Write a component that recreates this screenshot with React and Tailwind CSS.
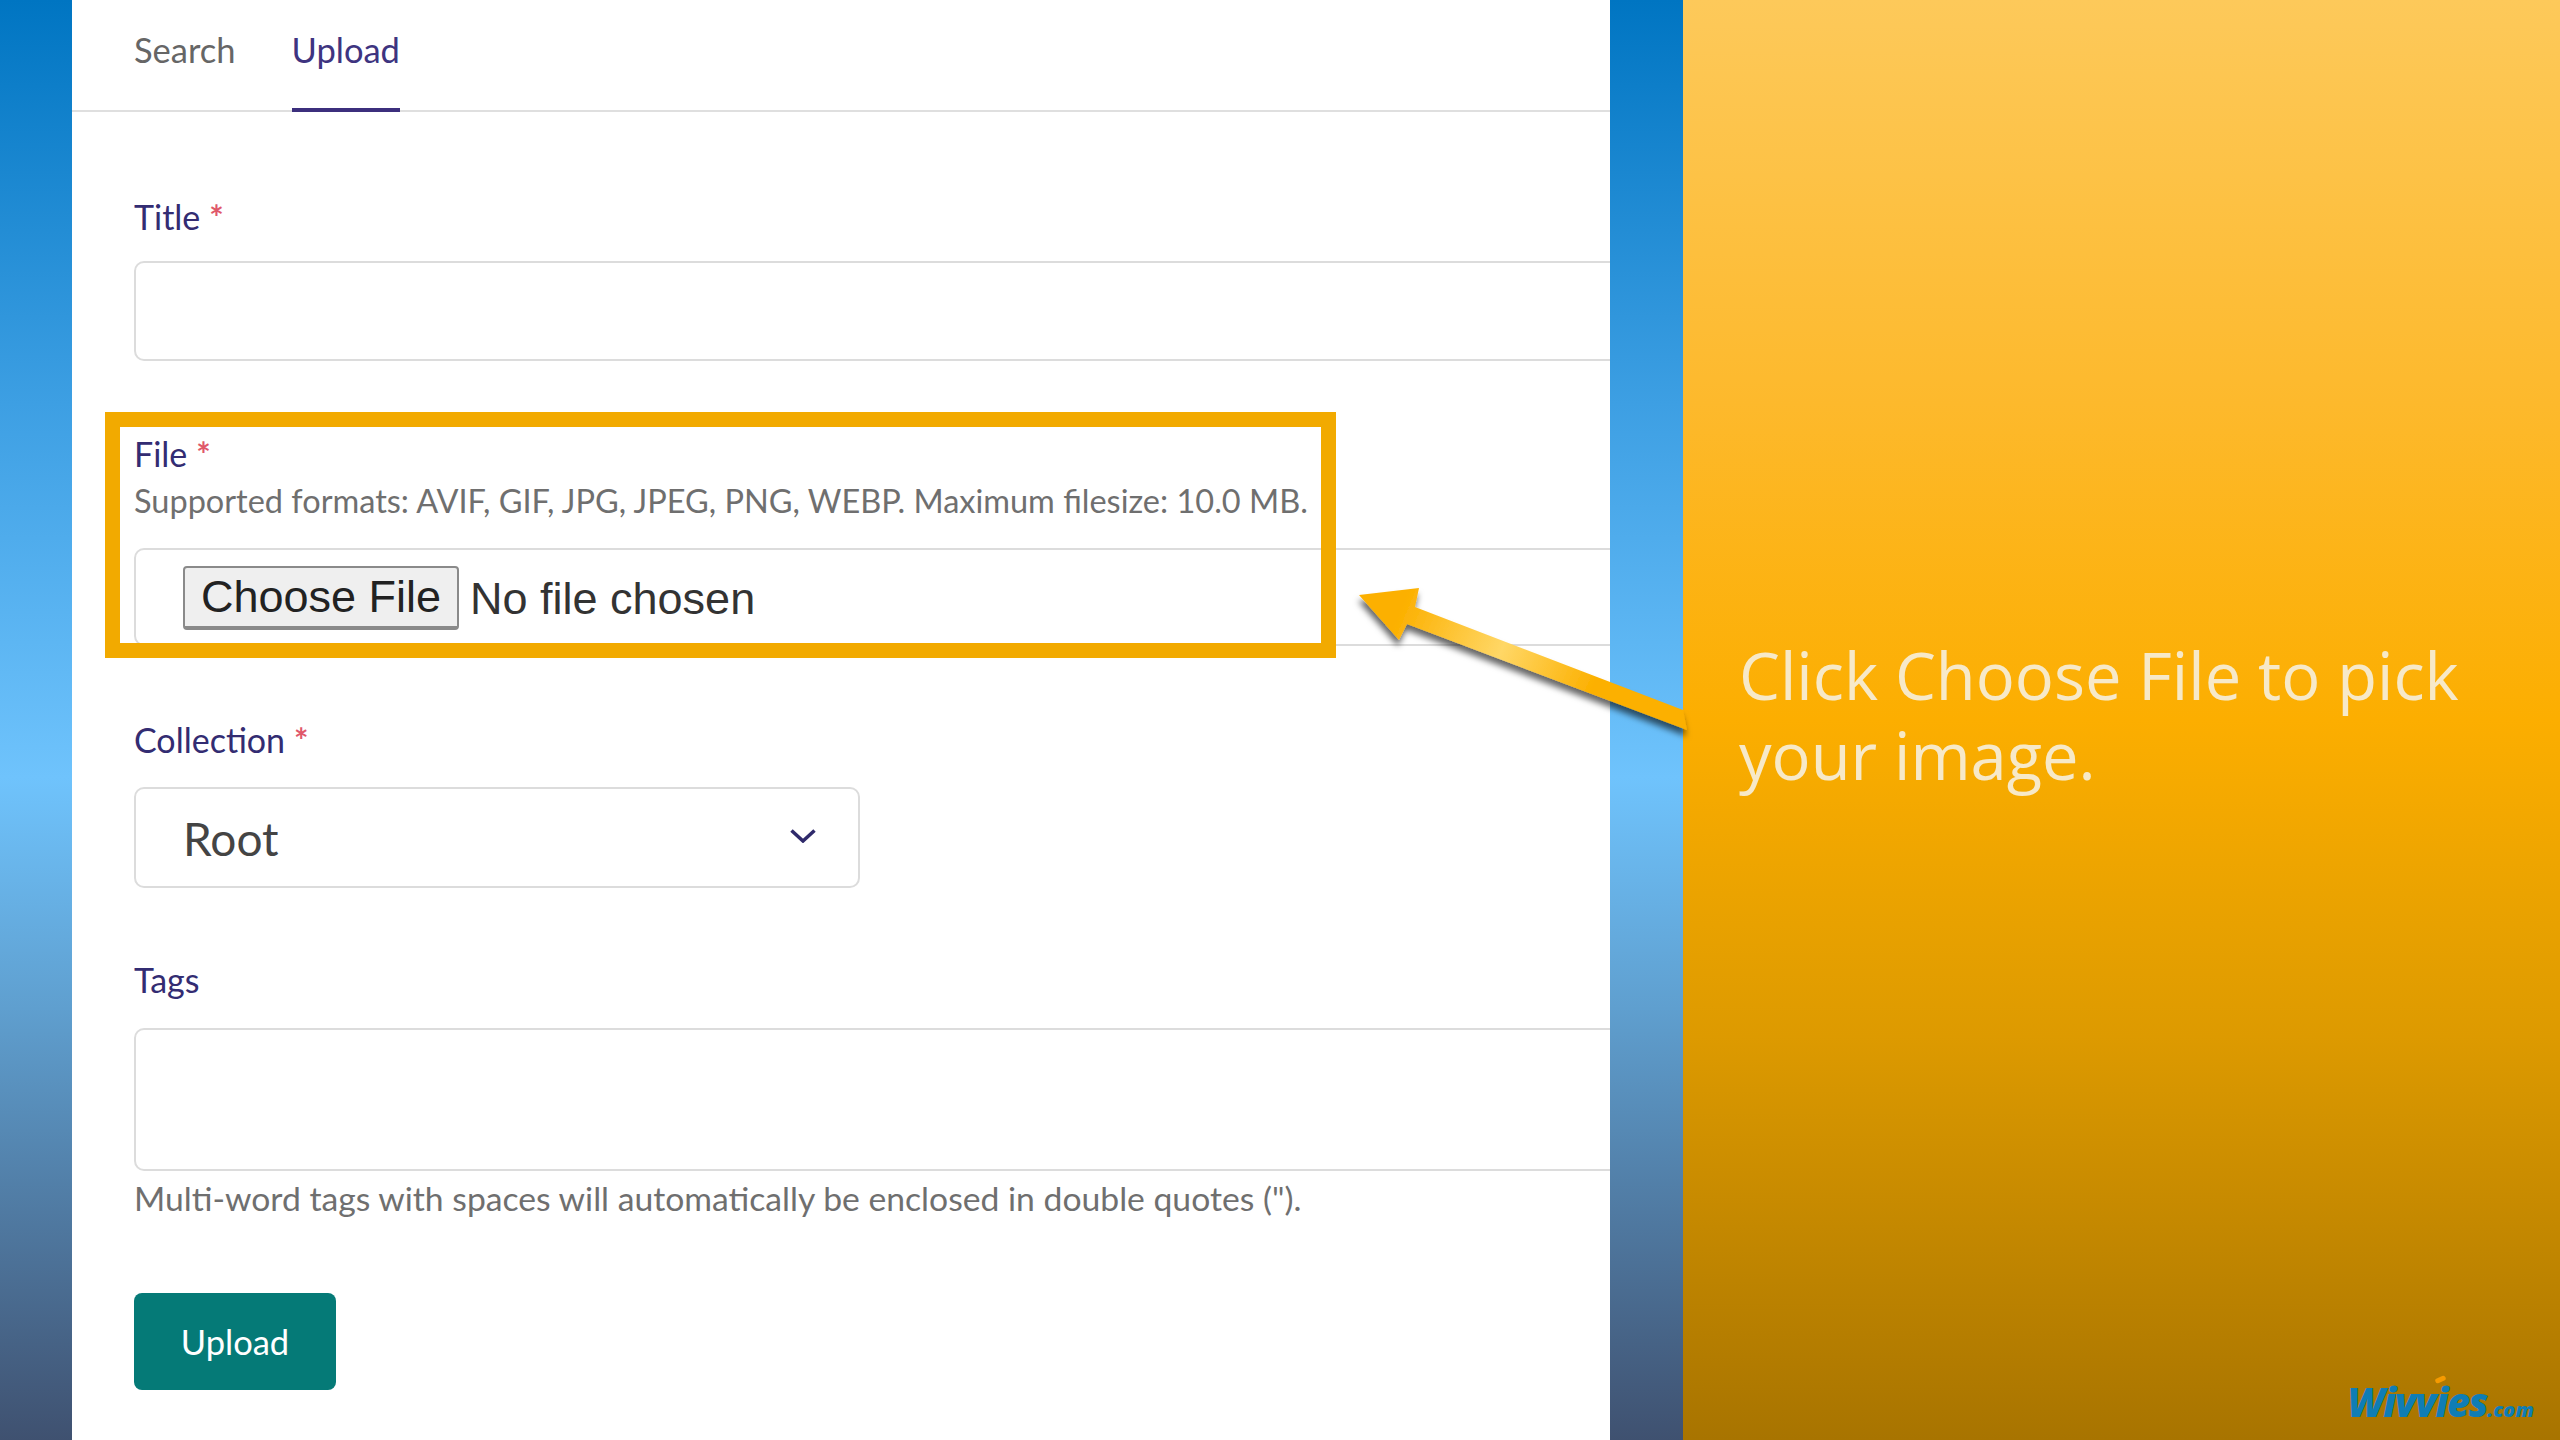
const labelClass = 'block h-[40px] text-[34px] leading-[40px] text-[#332c72]';
const helpClass = 'h-[40px] leading-[40px] text-[#6f6f6f]';
const inputClass = 'w-[1600px] rounded-[10px] border-2 border-[#dcdcdc] bg-white';

function Label({ children, required, className }) {
  return (
    <label className={`${labelClass} ${className}`}>
      {children}
      {required && <span className="ml-[9px] font-bold text-[#e0586a]">*</span>}
    </label>
  );
}

function Arrow() {
  return (
    <svg className="absolute left-[1340px] top-[570px]" width="370" height="190" viewBox="1340 570 370 190">
      <defs>
        <linearGradient id="shaft" gradientUnits="userSpaceOnUse" x1="1400" y1="610" x2="1640" y2="710">
          <stop offset="0" stopColor="#fcb000" />
          <stop offset="0.42" stopColor="#ffd766" />
          <stop offset="0.8" stopColor="#fcb000" />
        </linearGradient>
        <filter id="arrow-shadow" x="-10%" y="-10%" width="120%" height="130%">
          <feDropShadow dx="-1" dy="6" stdDeviation="3" floodColor="#000" floodOpacity="0.6" />
        </filter>
      </defs>
      <path
        d="M1359 595 L1419 588 L1415 607 L1683 710 L1687 730 L1407 624 L1399 640 Z"
        fill="url(#shaft)"
        filter="url(#arrow-shadow)"
      />
    </svg>
  );
}

export default function App() {
  return (
    <div className="relative flex h-screen overflow-hidden bg-[linear-gradient(180deg,#0075c2_0%,#3d9fe3_28%,#6fc3fc_54%,#5f9fcf_70%,#3f5170_100%)] pl-[72px] font-['Lato','Open_Sans',sans-serif]">
      <main className="w-[1538px] shrink-0 overflow-hidden bg-white">
        {/* Tabs */}
        <nav className="flex h-[112px] gap-[56px] border-b-2 border-[#dfdfdf] pl-[62px] text-[34.5px]">
          <a className="pt-[28px] leading-[44px] text-[#666]">Search</a>
          <a className="-mb-[2px] border-b-[4px] border-[#3c2f7d] pt-[28px] leading-[44px] text-[#3e3480]">Upload</a>
        </nav>

        <form className="pl-[62px]">
          <Label required className="mt-[85px]">Title</Label>
          <div className={`${inputClass} mt-[24px] h-[100px]`} />

          <Label required className="mt-[73px]">File</Label>
          <p className={`${helpClass} mt-[7px] text-[32.5px]`}>
            Supported formats: AVIF, GIF, JPG, JPEG, PNG, WEBP. Maximum filesize: 10.0 MB.
          </p>
          <div className={`${inputClass} mt-[27px] flex h-[98px] items-center gap-[11px] pl-[47px] font-['Liberation_Sans',sans-serif] text-[45px] text-[#333]`}>
            <button type="button" className="mt-[1px] h-[64px] w-[276px] rounded-[4px] border-2 border-b-[4px] border-[#8a8a8a] bg-[#efefef] leading-[45px] text-[#222]">
              Choose File
            </button>
            <span className="pt-[3px]">No file chosen</span>
          </div>

          <Label required className="mt-[74px]">Collection</Label>
          <div className="mt-[27px] flex h-[101px] w-[726px] items-center justify-between rounded-[10px] border-2 border-[#dcdcdc] pl-[47px] pr-[42px]">
            <span className="pt-[2px] text-[46px] text-[#444]">Root</span>
            <svg width="26" height="14" viewBox="0 0 26 14" fill="none" stroke="#2f2a6b" strokeWidth="3.5" className="-mt-[4px]">
              <path d="M1.5 1.5 L13 12 L24.5 1.5" />
            </svg>
          </div>

          <Label className="mt-[72px]">Tags</Label>
          <div className={`${inputClass} mt-[28px] h-[143px]`} />
          <p className={`${helpClass} mt-[7px] text-[33.7px]`}>
            Multi-word tags with spaces will automatically be enclosed in double quotes (").
          </p>

          <button type="button" className="mt-[75px] h-[97px] w-[202px] rounded-[8px] bg-[#057a77] text-[34.5px] text-white">
            Upload
          </button>
        </form>
      </main>

      {/* Callout panel */}
      <aside className="relative ml-[73px] flex-1 bg-[linear-gradient(180deg,#fdc95a_0%,#fdb92c_28%,#fcae00_50%,#dd9a00_72%,#a87400_100%)] pl-[56px] pt-[635px]">
        <p className="w-[800px] font-['Open_Sans',sans-serif] text-[65px] leading-[80px] text-[#f7e9c8]">
          Click Choose File to pick your image.
        </p>
        <div className="absolute bottom-[16px] right-[26px] flex items-baseline font-['Open_Sans',sans-serif] font-extrabold italic text-[#0f7db5]">
          <span className="relative text-[40px] leading-[44px] tracking-[-1.5px]">
            Wivvies
            <span className="absolute left-[88px] top-[-3px] h-[5px] w-[11px] -rotate-[25deg] rounded-full bg-[#f59a00]" />
          </span>
          <span className="text-[20px] leading-[22px]">.com</span>
        </div>
      </aside>

      {/* Highlight box */}
      <div className="absolute left-[105px] top-[412px] h-[246px] w-[1231px] border-[15px] border-[#f2aa00]" />
      <Arrow />
    </div>
  );
}
